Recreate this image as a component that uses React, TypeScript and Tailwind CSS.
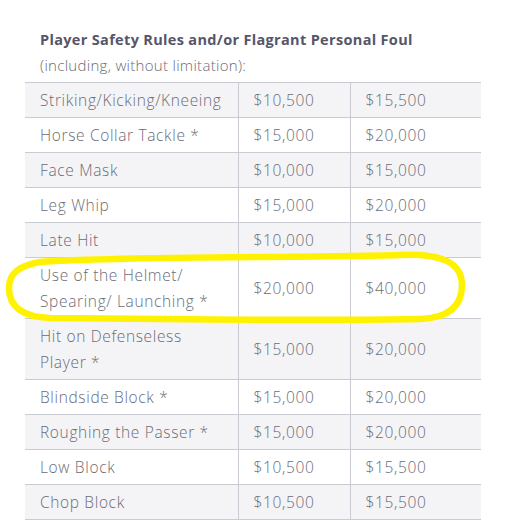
import React from "react";

const rows: [string[], string, string][] = [
  [["Striking/Kicking/Kneeing"], "$10,500", "$15,500"],
  [["Horse Collar Tackle *"], "$15,000", "$20,000"],
  [["Face Mask"], "$10,000", "$15,000"],
  [["Leg Whip"], "$15,000", "$20,000"],
  [["Late Hit"], "$10,000", "$15,000"],
  [["Use of the Helmet/", "Spearing/ Launching *"], "$20,000", "$40,000"],
  [["Hit on Defenseless", "Player *"], "$15,000", "$20,000"],
  [["Blindside Block *"], "$15,000", "$20,000"],
  [["Roughing the Passer *"], "$15,000", "$20,000"],
  [["Low Block"], "$10,500", "$15,500"],
  [["Chop Block"], "$10,500", "$15,500"],
];

export default function App() {
  return (
    <div
      className="relative w-[507px] h-[528px] bg-white overflow-hidden"
      style={{ fontFamily: '"Open Sans", "DejaVu Sans", sans-serif' }}
    >
      <div className="pl-[25px] pt-[27px]">
        <div className="pl-[15px] text-[14.5px] leading-[26px] font-bold tracking-[0.33px] text-[#56566b]">
          Player Safety Rules and/or Flagrant Personal Foul
        </div>
        <div className="pl-[15px] text-[15px] leading-[25px] font-light tracking-[0.3px] text-[#6b6b76] mb-[4px]">
          (including, without limitation):
        </div>
        <table className="w-[456px] border-collapse text-[15.5px] leading-[26px] font-light tracking-[0.65px] text-[#6b6b76]">
          <tbody>
            {rows.map(([name, a, b], i) => (
              <tr
                key={i}
                className={`border-t border-b border-[#cacad3] ${i % 2 === 0 ? "bg-[#f4f4f6]" : "bg-white"}`}
              >
                <td className="w-[213px] pl-[15px] py-[4px] align-middle">
                  {name.map((l, j) => (
                    <div key={j}>{l}</div>
                  ))}
                </td>
                <td className="w-[112px] pl-[15px] py-[4px] border-l border-r border-[#cacad3] align-middle">
                  {a}
                </td>
                <td className="pl-[15px] py-[4px] align-middle">{b}</td>
              </tr>
            ))}
          </tbody>
        </table>
      </div>
      <svg
        className="absolute left-0 top-0 pointer-events-none"
        width="507"
        height="528"
        viewBox="0 0 507 528"
      >
        <path
          d="M 40 262 C 120 256, 300 258, 400 255 C 440 253, 462 262, 462 285 C 462 305, 450 318, 420 319 C 320 321, 140 319, 50 318 C 24 317, 9 308, 9 288 C 9 274, 18 266, 40 262 Z"
          fill="none"
          stroke="#fff200"
          strokeWidth="6.5"
          strokeLinejoin="round"
        />
      </svg>
    </div>
  );
}
